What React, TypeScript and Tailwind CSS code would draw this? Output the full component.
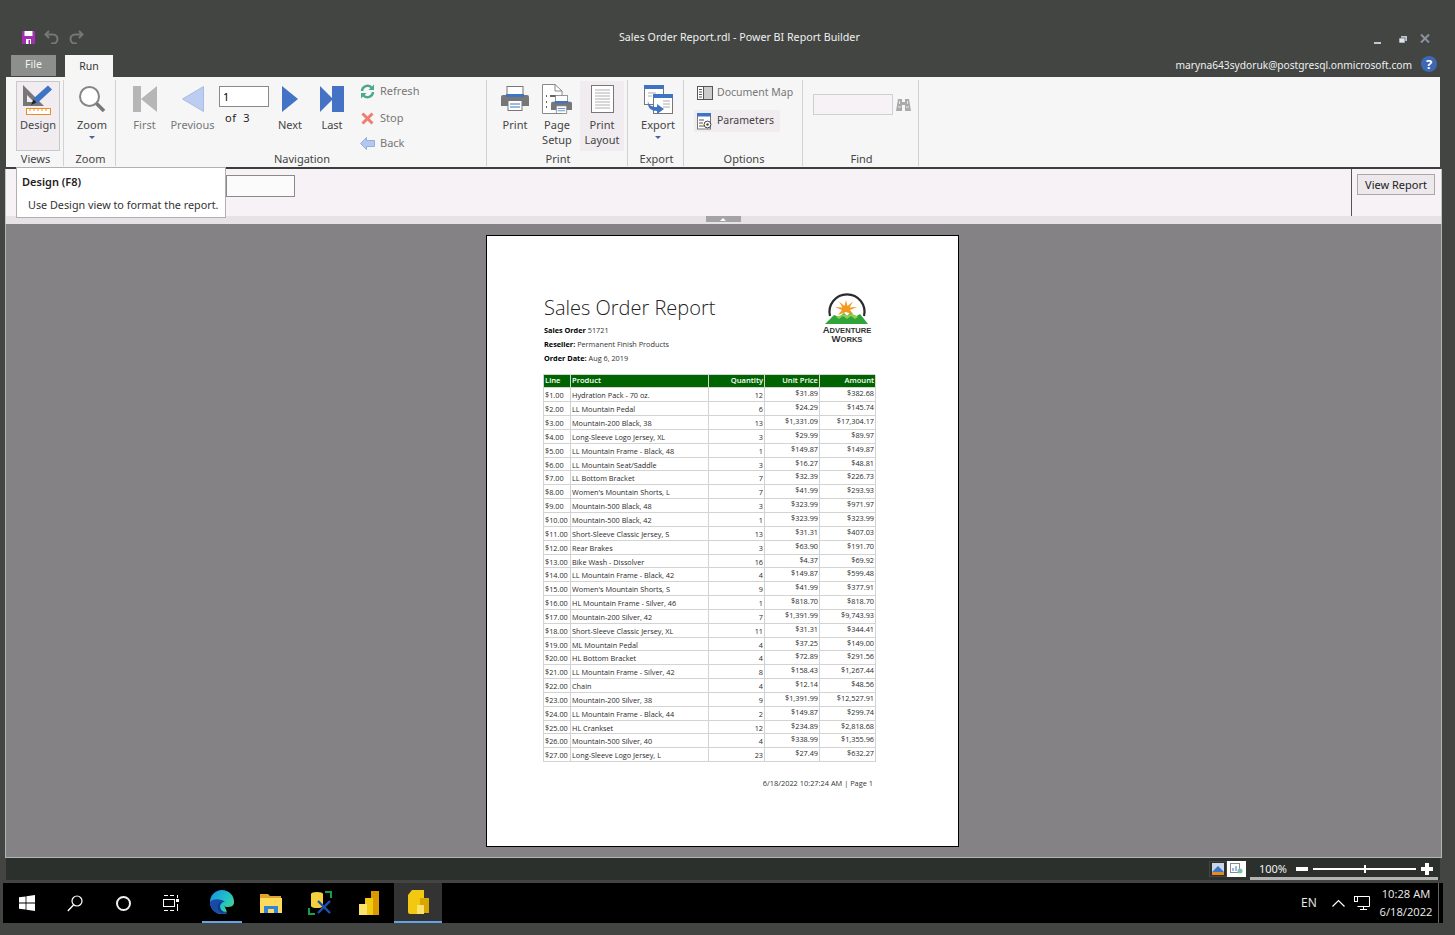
import React from "react";

const UI_FONT = "font-['Noto_Sans',sans-serif]";

const orderLines: [string, string, string, string, string][] = [
  ["$1.00", "Hydration Pack - 70 oz.", "12", "$31.89", "$382.68"],
  ["$2.00", "LL Mountain Pedal", "6", "$24.29", "$145.74"],
  ["$3.00", "Mountain-200 Black, 38", "13", "$1,331.09", "$17,304.17"],
  ["$4.00", "Long-Sleeve Logo Jersey, XL", "3", "$29.99", "$89.97"],
  ["$5.00", "LL Mountain Frame - Black, 48", "1", "$149.87", "$149.87"],
  ["$6.00", "LL Mountain Seat/Saddle", "3", "$16.27", "$48.81"],
  ["$7.00", "LL Bottom Bracket", "7", "$32.39", "$226.73"],
  ["$8.00", "Women's Mountain Shorts, L", "7", "$41.99", "$293.93"],
  ["$9.00", "Mountain-500 Black, 48", "3", "$323.99", "$971.97"],
  ["$10.00", "Mountain-500 Black, 42", "1", "$323.99", "$323.99"],
  ["$11.00", "Short-Sleeve Classic Jersey, S", "13", "$31.31", "$407.03"],
  ["$12.00", "Rear Brakes", "3", "$63.90", "$191.70"],
  ["$13.00", "Bike Wash - Dissolver", "16", "$4.37", "$69.92"],
  ["$14.00", "LL Mountain Frame - Black, 42", "4", "$149.87", "$599.48"],
  ["$15.00", "Women's Mountain Shorts, S", "9", "$41.99", "$377.91"],
  ["$16.00", "HL Mountain Frame - Silver, 46", "1", "$818.70", "$818.70"],
  ["$17.00", "Mountain-200 Silver, 42", "7", "$1,391.99", "$9,743.93"],
  ["$18.00", "Short-Sleeve Classic Jersey, XL", "11", "$31.31", "$344.41"],
  ["$19.00", "ML Mountain Pedal", "4", "$37.25", "$149.00"],
  ["$20.00", "HL Bottom Bracket", "4", "$72.89", "$291.56"],
  ["$21.00", "LL Mountain Frame - Silver, 42", "8", "$158.43", "$1,267.44"],
  ["$22.00", "Chain", "4", "$12.14", "$48.56"],
  ["$23.00", "Mountain-200 Silver, 38", "9", "$1,391.99", "$12,527.91"],
  ["$24.00", "LL Mountain Frame - Black, 44", "2", "$149.87", "$299.74"],
  ["$25.00", "HL Crankset", "12", "$234.89", "$2,818.68"],
  ["$26.00", "Mountain-500 Silver, 40", "4", "$338.99", "$1,355.96"],
  ["$27.00", "Long-Sleeve Logo Jersey, L", "23", "$27.49", "$632.27"],
];
// rows that came out a pixel shorter in the rendered report
const shortRows = [5, 12, 18, 24];

function Group({ width, label, children }: { width: string; label: string; children: React.ReactNode }) {
  return (
    <div className={`${width} shrink-0 h-[86px] border-r border-[#d2d2d2] flex flex-col`}>
      <div className="h-[71px] flex items-start">{children}</div>
      <div className="h-[15px] leading-[15px] text-center pl-[2px] text-[11px] text-[#444]">{label}</div>
    </div>
  );
}

function BigButton({ width, lines, icon, active, arrow, dim }: { width: string; lines: string[]; icon: React.ReactNode; active?: boolean; arrow?: boolean; dim?: boolean }) {
  return (
    <div className={`${width} shrink-0 h-[70px] mt-[1px] flex flex-col items-center ${active ? "bg-[#f1ecf0]" : ""}`}>
      <div className="h-[36px] flex items-center justify-center">{icon}</div>
      {lines.map((l) => (
        <div key={l} className={`h-[15px] leading-[15px] text-[11px] ${dim ? "text-[#777]" : "text-[#444]"}`}>{l}</div>
      ))}
      {arrow && <div className="mt-[4px] w-0 h-0 border-l-[3px] border-r-[3px] border-t-[3px] border-l-transparent border-r-transparent border-t-[#4a5fa8]" />}
    </div>
  );
}

function SmallRow({ icon, label, mb }: { icon: React.ReactNode; label: string; mb: string }) {
  return (
    <div className={`h-[16px] flex items-center gap-[5px] ${mb}`}>
      <div className="w-[15px] h-[16px] flex items-center justify-center">{icon}</div>
      <span className="text-[11px] text-[#777]">{label}</span>
    </div>
  );
}

/* ribbon icons */
const DesignIcon = () => (
  <svg width="32" height="32" viewBox="0 0 32 32">
    <path d="M1 1 L1 22 L22 22 Z" fill="#777" />
    <path d="M5 11 L5 18 L12 18 Z" fill="#f1ecf0" />
    <path d="M10 20 L12 14 L26 1.5 L30 5.5 L16 18.5 Z" fill="#3f74c4" />
    <path d="M9 21 L11.5 15.5 L14.5 18.5 Z" fill="#222" />
    <rect x="4.5" y="24.5" width="24" height="6" fill="#fff" stroke="#ef8a1f" />
    <path d="M8 25v2M12 25v2M16 25v2M20 25v2M24 25v2" stroke="#ef8a1f" />
  </svg>
);
const ZoomIcon = () => (
  <svg width="28" height="28" viewBox="0 0 28 28">
    <circle cx="11.5" cy="11.5" r="9.5" fill="#fff" stroke="#858585" strokeWidth="2" />
    <path d="M18.5 18.5 L26 26" stroke="#777" strokeWidth="3.5" />
  </svg>
);
const FirstIcon = () => (
  <svg width="24" height="26" viewBox="0 0 24 26"><rect width="8" height="26" fill="#b6b6b6" /><path d="M24 0V26L8 13Z" fill="#b6b6b6" /></svg>
);
const PrevIcon = () => (
  <svg width="22" height="26" viewBox="0 0 22 26"><path d="M21.5 .5V25.5L.5 13Z" fill="#bccdf1" stroke="#a9bce6" /></svg>
);
const NextIcon = () => (
  <svg width="16" height="26" viewBox="0 0 16 26"><path d="M0 0V26L16 13Z" fill="#4472c4" /></svg>
);
const LastIcon = () => (
  <svg width="24" height="26" viewBox="0 0 24 26"><path d="M0 0V26L13 13Z" fill="#4472c4" /><rect x="12" width="12" height="26" fill="#4472c4" /></svg>
);
const RefreshIcon = () => (
  <svg width="15" height="15" viewBox="0 0 15 15" fill="none">
    <path d="M2 7a5.5 5.5 0 0 1 9.5-3.5" stroke="#4aa98c" strokeWidth="2.4" />
    <path d="M13 8a5.5 5.5 0 0 1-9.5 3.5" stroke="#4aa98c" strokeWidth="2.4" />
    <path d="M14 .5V6H8.5Z" fill="#4aa98c" /><path d="M1 14.5V9H6.5Z" fill="#4aa98c" />
  </svg>
);
const StopIcon = () => (
  <svg width="13" height="13" viewBox="0 0 13 13"><path d="M1.5 1.5 L11.5 11.5 M11.5 1.5 L1.5 11.5" stroke="#ec7f72" strokeWidth="3" /></svg>
);
const BackIcon = () => (
  <svg width="15" height="13" viewBox="0 0 15 13"><path d="M.5 6.5 L6.5 .5V3.5H14.5V9.5H6.5V12.5Z" fill="#b4c7ec" stroke="#94aee0" /></svg>
);
const PrinterShape = ({ x = 0, y = 0 }: { x?: number; y?: number }) => (
  <g transform={`translate(${x} ${y})`}>
    <rect x="6" y="0.5" width="16" height="10" fill="#fff" stroke="#777" />
    <path d="M0 11a2 2 0 0 1 2-2H26a2 2 0 0 1 2 2V20H0Z" fill="#777" />
    <rect x="5" y="8" width="18" height="3" fill="#3f74c4" />
    <rect x="7" y="14.5" width="14" height="10" fill="#fff" stroke="#777" />
    <path d="M9 18h10M9 21h10" stroke="#3f74c4" />
  </g>
);
const PrintIcon = () => (
  <svg width="28" height="26" viewBox="0 0 28 26"><PrinterShape /></svg>
);
const PageSetupIcon = () => (
  <svg width="30" height="30" viewBox="0 0 30 30">
    <path d="M.5 .5H13L20 7V29.5H.5Z" fill="#fff" stroke="#888" />
    <path d="M13 .5V7H20" fill="none" stroke="#888" />
    <path d="M4 12h1M8 12h6M4 18h1M4 23h1" stroke="#666" strokeWidth="2" />
    <g transform="translate(9 11) scale(.75)"><PrinterShape /></g>
  </svg>
);
const PrintLayoutIcon = () => (
  <svg width="23" height="28" viewBox="0 0 23 28">
    <rect x=".5" y=".5" width="22" height="27" fill="#fff" stroke="#777" />
    <path d="M4 5h15M4 8h15M4 11h15M4 14h15M4 17h15M4 20h15M4 23h15" stroke="#b0b0b0" />
  </svg>
);
const ExportIcon = () => (
  <svg width="29" height="29" viewBox="0 0 29 29">
    <rect x=".5" y=".5" width="19" height="19" fill="#fff" stroke="#777" />
    <rect x="0" y="0" width="20" height="4" fill="#3f74c4" />
    <rect x="9.5" y="9.5" width="19" height="19" fill="#fff" stroke="#777" />
    <rect x="9" y="9" width="20" height="4" fill="#3f74c4" />
    <path d="M19 16h7M19 19h7M19 22h7M4 8h8M4 11h4" stroke="#aaa" />
    <path d="M4 15c0 5 3 7 9 7v-3l7 5-7 5v-3C6 26 3 22 4 15Z" fill="#3f74c4" />
  </svg>
);
const DocMapIcon = () => (
  <svg width="16" height="14" viewBox="0 0 16 14">
    <rect x=".5" y=".5" width="15" height="13" fill="#ccc" stroke="#555" />
    <rect x="1" y="1" width="6" height="12" fill="#fff" />
    <path d="M6.5 1v12" stroke="#555" /><path d="M2 3.5h3M2 6h3M2 8.5h3M2 11h3" stroke="#555" />
  </svg>
);
const ParamsIcon = () => (
  <svg width="15" height="17" viewBox="0 0 15 17">
    <rect x=".5" y=".5" width="13" height="15.5" fill="#fff" stroke="#777" />
    <rect width="14" height="3.5" fill="#3f74c4" />
    <path d="M2 7h5M2 10h4M2 13h5" stroke="#555" />
    <circle cx="10.5" cy="11.5" r="3.4" fill="#fff" stroke="#444" />
    <circle cx="10.5" cy="11.5" r="1.2" fill="#444" />
  </svg>
);
const BinocularsIcon = () => (
  <svg width="15" height="14" viewBox="0 0 15 14" fill="#aaa">
    <path d="M2 1H6V4H9V1H13L15 13H9V7H6V13H0Z" />
    <path d="M3.5 3V6M11.5 3V6M2 9H5M10 9H13" stroke="#e8e8e8" />
  </svg>
);

function AdventureLogo() {
  return (
    <div className="w-[50px] mr-[3px] flex flex-col items-center">
      <svg width="50" height="32" viewBox="0 0 50 32" className="block">
        <path d="M8 23 A17.5 17.5 0 1 1 42 23" fill="none" stroke="#2b2b2b" strokeWidth="2.2" />
        <path d="M24 7 L25.5 13 L31 8.5 L27.5 14.5 L35 14 L28 17 L32 22 L24 19 L16 22 L20 17 L13 14 L20.5 14.5 L17 8.5 L22.5 13 Z" fill="#f39a1e" />
        <path d="M3 31 L12 22 L17 24 L22 20 L25 23 L28 20 L33 24 L38 21 L46 31 Z" fill="#2fa43a" />
        <path d="M14 24 L17 26 L21 23 L25 26 L29 23 L33 26 L36 24 L33 22 L28 21 L25 23 L22 21 L17 23 Z" fill="#8fd14f" />
      </svg>
      <div className="mt-[1px] font-['Liberation_Sans',sans-serif] font-bold text-[7.6px] leading-[8px] text-[#333] text-center whitespace-nowrap">
        <div><span className="text-[9.5px]">A</span>DVENTURE</div>
        <div><span className="text-[9.5px]">W</span>ORKS</div>
      </div>
    </div>
  );
}

function ReportTable() {
  const cell = "border-r border-b border-[#d3d3d3] px-[1px] overflow-hidden whitespace-nowrap";
  return (
    <div className="w-[332px] grid grid-cols-[27px_138px_56px_55px_56px] border-l border-t border-[#d3d3d3] text-[7.3px] text-[#2a2a2a] font-['Open_Sans',sans-serif]">
      {["Line", "Product", "Quantity", "Unit Price", "Amount"].map((h, i) => (
        <div key={h} className={`h-[13px] leading-[10px] bg-[#006400] text-white font-semibold text-[7.6px] ${cell} ${i > 1 ? "text-right" : "text-left"}`}>{h}</div>
      ))}
      {orderLines.map((row, r) => {
        const h = shortRows.includes(r) ? "h-[13px]" : "h-[14px]";
        return (
          <React.Fragment key={row[0]}>
            <div className={`${h} leading-[14px] ${cell}`}>{row[0]}</div>
            <div className={`${h} leading-[14px] ${cell} pl-[1px]`}>{row[1]}</div>
            <div className={`${h} leading-[14px] text-right ${cell}`}>{row[2]}</div>
            <div className={`${h} leading-[11px] text-right ${cell}`}>{row[3]}</div>
            <div className={`${h} leading-[11px] text-right ${cell}`}>{row[4]}</div>
          </React.Fragment>
        );
      })}
    </div>
  );
}

function ReportPage() {
  return (
    <div className="w-[473px] h-[612px] bg-white border border-black pl-[56px] pt-[57px] font-['Open_Sans',sans-serif]">
      <div className="w-[332px] h-[81px] flex justify-between items-start">
        <div className="pl-[1px] pt-[1px]">
          <div className="h-[29px] leading-[28px] text-[20px] font-light text-[#222]">Sales Order Report</div>
          <div className="h-[14px] leading-[14px] text-[7.3px] text-[#333]"><b className="text-black">Sales Order</b> 51721</div>
          <div className="h-[14px] leading-[14px] text-[7.3px] text-[#333]"><b className="text-black">Reseller:</b> Permanent Finish Products</div>
          <div className="h-[14px] leading-[14px] text-[7.3px] text-[#333]"><b className="text-black">Order Date:</b> Aug 6, 2019</div>
        </div>
        <AdventureLogo />
      </div>
      <ReportTable />
      <div className="w-[332px] mt-[15px] pr-[2px] text-right text-[7.4px] leading-[12px] text-[#333]">6/18/2022 10:27:24 AM | Page 1</div>
    </div>
  );
}

export default function App() {
  return (
    <div className={`w-[1455px] h-[935px] overflow-hidden bg-[#424542] flex flex-col ${UI_FONT}`}>
      {/* title bar */}
      <div className="h-[55px] shrink-0 flex items-start pt-[30px] pl-[22px] text-white">
        <div className="w-[597px] flex items-center gap-[9px] h-[14px]">
          <svg width="13" height="13" viewBox="0 0 13 13">
            <rect width="13" height="13" fill="#a12fb0" />
            <rect x="2.5" y="0" width="8" height="5" fill="#fff" />
            <rect x="4" y="8" width="5" height="5" fill="#fff" />
            <rect x="6.5" y="9" width="1.5" height="4" fill="#a12fb0" />
          </svg>
          <svg width="15" height="14" viewBox="0 0 15 14" fill="none" stroke="#777" strokeWidth="2">
            <path d="M5 1 L1.5 4.5 L5 8" /><path d="M2 4.5H9a4.5 4.5 0 0 1 0 9H7" />
          </svg>
          <svg width="15" height="14" viewBox="0 0 15 14" fill="none" stroke="#777" strokeWidth="2" className="ml-[1px]">
            <path d="M10 1 L13.5 4.5 L10 8" /><path d="M13 4.5H6a4.5 4.5 0 0 0 0 9H8" />
          </svg>
        </div>
        <div className="text-[10.7px] leading-[14px] w-[755px] text-[#f0f0f0]">Sales Order Report.rdl - Power BI Report Builder</div>
        <div className="flex items-center h-[24px]">
          <div className="w-[7px] h-[2px] bg-[#c0c8d8] mt-[1px]" />
          <svg width="8" height="7" viewBox="0 0 8 7" className="ml-[18px] -mt-[6px]"><rect x="2" width="6" height="5" fill="#c0c8d8" /><rect y="2" width="6" height="5" fill="#dfe4ee" stroke="#424542" strokeWidth=".6" /></svg>
          <svg width="10" height="9" viewBox="0 0 10 9" className="ml-[13px] -mt-[8px]"><path d="M1 .5 L9 8.5 M9 .5 L1 8.5" stroke="#8c93a0" strokeWidth="2" /></svg>
        </div>
      </div>

      {/* tabs */}
      <div className="h-[22px] shrink-0 flex items-end pl-[11px] relative">
        <div className="w-[45px] h-[21px] mb-[1px] bg-[#8c8f8c] text-[#f4f4f4] text-[10.5px] leading-[19px] text-center">File</div>
        <div className="w-[48px] h-[22px] ml-[9px] bg-[#f6f6f6] text-[#333] text-[10.5px] leading-[22px] text-center">Run</div>
        <div className="flex-1 flex items-center justify-end pb-[3px] pr-[18px] gap-[9px] h-[22px]">
          <span className="text-[10.2px] text-[#f0f0f0] leading-[18px]">maryna643sydoruk@postgresql.onmicrosoft.com</span>
          <div className="w-[16px] h-[16px] rounded-full bg-[#3f68b4] text-white text-[13px] font-bold leading-[16px] text-center mb-[1px]">?</div>
        </div>
      </div>

      {/* ribbon */}
      <div className="ml-[6px] w-[1434px] h-[92px] shrink-0 bg-[#f6f6f6] border-b-2 border-[#3c3f3c] pt-[3px] flex relative">
        <Group width="w-[58px]" label="Views">
          <div className="ml-[10px] w-[44px] h-[70px] mt-[1px] border border-[#c8c8c8] bg-[#f1ecf0] flex flex-col items-center">
            <div className="h-[35px] flex items-center justify-center"><DesignIcon /></div>
            <div className="h-[15px] leading-[15px] text-[11px] text-[#444]">Design</div>
          </div>
        </Group>
        <Group width="w-[52px]" label="Zoom">
          <div className="pl-[6px]"><BigButton width="w-[44px]" lines={["Zoom"]} icon={<ZoomIcon />} arrow /></div>
        </Group>
        <Group width="w-[371px]" label="Navigation">
          <div className="pl-[7px] flex items-start">
            <BigButton width="w-[43px]" lines={["First"]} icon={<FirstIcon />} dim />
            <BigButton width="w-[53px]" lines={["Previous"]} icon={<PrevIcon />} dim />
            <div className="w-[50px] shrink-0 mt-[6px]">
              <div className="h-[21px] border border-[#8a8a8a] bg-white text-[11px] leading-[19px] pl-[3px] text-black">1</div>
              <div className="mt-[3px] pl-[6px] text-[11px] leading-[15px] text-[#222] tracking-[.5px]">of&nbsp; 3</div>
            </div>
            <BigButton width="w-[42px]" lines={["Next"]} icon={<NextIcon />} />
            <BigButton width="w-[42px]" lines={["Last"]} icon={<LastIcon />} />
            <div className="ml-[7px] pt-[3px]">
              <SmallRow icon={<RefreshIcon />} label="Refresh" mb="mb-[11px]" />
              <SmallRow icon={<StopIcon />} label="Stop" mb="mb-[9px]" />
              <SmallRow icon={<BackIcon />} label="Back" mb="" />
            </div>
          </div>
        </Group>
        <Group width="w-[141px]" label="Print">
          <div className="pl-[7px] flex items-start">
            <BigButton width="w-[42px]" lines={["Print"]} icon={<PrintIcon />} />
            <BigButton width="w-[42px]" lines={["Page", "Setup"]} icon={<PageSetupIcon />} />
            <div className="ml-[2px]"><BigButton width="w-[44px]" lines={["Print", "Layout"]} icon={<PrintLayoutIcon />} active /></div>
          </div>
        </Group>
        <Group width="w-[56px]" label="Export">
          <div className="pl-[8px]"><BigButton width="w-[44px]" lines={["Export"]} icon={<ExportIcon />} arrow /></div>
        </Group>
        <Group width="w-[119px]" label="Options">
          <div className="pl-[10px] pt-[2px] text-[10.5px]">
            <div className="h-[22px] flex items-center gap-[4px] pl-[3px] text-[#777] whitespace-nowrap"><DocMapIcon /><span>Document Map</span></div>
            <div className="w-[86px] h-[22px] mt-[6px] flex items-center gap-[5px] pl-[3px] bg-[#f1ecf0] text-[#444] whitespace-nowrap"><ParamsIcon /><span>Parameters</span></div>
          </div>
        </Group>
        <Group width="w-[116px]" label="Find">
          <div className="pl-[10px] pt-[14px] flex items-center gap-[3px]">
            <div className="w-[80px] h-[21px] border border-[#d0d0d0] bg-[#f6f2f6]" />
            <BinocularsIcon />
          </div>
        </Group>
      </div>

      {/* parameter bar */}
      <div className="ml-[5px] w-[1437px] h-[47px] shrink-0 bg-[#f6f2f6] border-l border-r border-[#c4c4c4] flex relative">
        <div className="ml-[220px] mt-[6px] w-[69px] h-[22px] border border-[#8a8a8a] bg-[#fbfbfb]" />
        <div className="ml-auto mr-[89px] w-px bg-[#555]" />
        <div className="absolute right-[6px] top-[5px] w-[78px] h-[21px] bg-[#ece8ec] border border-[#a8a8a8] text-[11px] leading-[19px] text-center text-[#222]">View Report</div>
        {/* hover tooltip */}
        <div className="absolute left-[10px] -top-[2px] w-[210px] h-[51px] bg-white border border-[#b0b0b0] pl-[5px] z-10">
          <div className="text-[11px] font-semibold leading-[14px] pt-[7px] h-[30px] text-[#222]">Design (F8)</div>
          <div className="text-[10.8px] leading-[14px] pl-[6px] text-[#333] whitespace-nowrap">Use Design view to format the report.</div>
        </div>
      </div>

      {/* collapse strip */}
      <div className="ml-[5px] w-[1437px] h-[8px] shrink-0 bg-[#e6e2e6] border-l border-r border-[#c4c4c4] flex justify-center pr-[1px]">
        <div className="w-[35px] h-[6px] bg-[#a4a4a4] flex justify-center items-center">
          <div className="w-0 h-0 border-l-[3px] border-r-[3px] border-b-[3px] border-l-transparent border-r-transparent border-b-white" />
        </div>
      </div>

      {/* report canvas */}
      <div className="ml-[5px] w-[1437px] h-[634px] shrink-0 bg-[#858285] border-l border-r border-b border-[#b4b4b4] flex justify-center pt-[11px] pr-[2px]">
        <ReportPage />
      </div>

      {/* status bar */}
      <div className="ml-[6px] w-[1434px] h-[22px] shrink-0 bg-[#2c302c] flex items-start justify-end text-white relative">
        <div className="mt-[3px] flex items-center mr-[4px]">
          <div className="w-[18px] h-[16px] border border-[#444] flex items-center justify-center">
            <svg width="12" height="12" viewBox="0 0 12 12"><rect width="12" height="9" fill="#c7d6ea" /><path d="M0 9L6 3l6 6Z" fill="#3f74c4" /><rect y="9" width="12" height="3" fill="#e58a24" /></svg>
          </div>
          <div className="w-[19px] h-[16px] bg-white flex items-center justify-center">
            <svg width="13" height="12" viewBox="0 0 13 12" fill="none"><rect x=".5" y=".5" width="9" height="9" stroke="#8a8a8a" /><path d="M3 8V5M6 8V3" stroke="#3f74c4" /><circle cx="10" cy="8" r="2.5" fill="#7cc2a4" /></svg>
          </div>
        </div>
        <div className="w-[188px] h-[22px] border-b-[3px] border-[#b4b4b4] flex items-center pt-[3px]">
          <span className="w-[46px] text-center text-[11px] leading-[16px] text-[#f0f0f0]">100%</span>
          <div className="w-[12px] h-[4px] bg-white" />
          <div className="w-[103px] h-[2px] bg-white ml-[5px] flex justify-center items-center"><div className="w-[2px] h-[8px] bg-white" /></div>
          <div className="ml-[5px] w-[12px] h-[12px] flex items-center justify-center relative">
            <div className="w-[12px] h-[4px] bg-white" />
            <div className="absolute left-[4px] top-0 w-[4px] h-[12px] bg-white" />
          </div>
        </div>
        <div className="w-[2px]" />
      </div>

      <div className="h-[3px] shrink-0" />

      {/* windows taskbar */}
      <div className="ml-[3px] w-[1440px] h-[40px] shrink-0 bg-black flex items-stretch text-white">
        <div className="w-[48px] flex items-center justify-center">
          <svg width="16" height="16" viewBox="0 0 16 16" fill="#fff"><path d="M0 2.3 6.6 1.4V7.6H0ZM7.4 1.3 16 0V7.6H7.4ZM0 8.4H6.6V14.6L0 13.7ZM7.4 8.4H16V16L7.4 14.7Z" /></svg>
        </div>
        <div className="w-[48px] flex items-center justify-center">
          <svg width="16" height="17" viewBox="0 0 16 17" fill="none" stroke="#fff" strokeWidth="1.2"><circle cx="10" cy="6" r="5" /><path d="M6.5 10 L.8 16" strokeWidth="1.4" /></svg>
        </div>
        <div className="w-[48px] flex items-center justify-center">
          <div className="w-[15px] h-[15px] rounded-full border-2 border-[#f0f0f0]" />
        </div>
        <div className="w-[48px] flex items-center justify-center">
          <svg width="16" height="16" viewBox="0 0 16 16" fill="none" stroke="#fff"><path d="M1 .5H5M7 .5H11M1 15.5H5M7 15.5H11" /><rect x=".5" y="4.5" width="11" height="7" /><rect x="13" y="4" width="3" height="3" fill="#fff" stroke="none" /><path d="M14.5 0V3M14.5 9V16" /></svg>
        </div>
        <div className="w-[40px] ml-[7px] flex items-center justify-center border-b-[2px] border-[#63a3e6]">
          <svg width="24" height="24" viewBox="0 0 24 24">
            <defs>
              <linearGradient id="edgeTop" x1="0" y1="0" x2="1" y2=".8"><stop offset="0" stopColor="#1493e0" /><stop offset=".6" stopColor="#22c3c8" /><stop offset="1" stopColor="#52d578" /></linearGradient>
            </defs>
            <circle cx="12" cy="12" r="12" fill="url(#edgeTop)" />
            <path d="M0 12C0 20 6 24 12 24c3 0 6-1 8-3-5 2-10 0-10-4 0-3 2-5 5-5-3-3-12-4-15 0Z" fill="#1a4aa8" />
            <path d="M11 12c-3 1-4 4-3 7 1 2 3 4 6 4-2-2-4-4-4-7 0-2 1-3 2-4Z" fill="#0b2d6b" opacity=".6" />
            <path d="M24 14c-1 2-3 3-6 3-2 0-4 0-4-2 1 3 3 5 3 9h7Z" fill="#000" />
          </svg>
        </div>
        <div className="w-[49px] ml-[4px] flex items-center justify-center">
          <svg width="22" height="20" viewBox="0 0 22 20"><path d="M0 1H8L10 3H21V19H0Z" fill="#dfa52c" /><rect x="0" y="5" width="22" height="15" fill="#ffd95c" /><rect x="4" y="13" width="14" height="7" fill="#2f86d9" /><rect x="8" y="16" width="6" height="4" fill="#ffd95c" /></svg>
        </div>
        <div className="w-[49px] flex items-center justify-center">
          <svg width="24" height="24" viewBox="0 0 24 24" fill="none">
            <path d="M1 17V23H7M17 1H23V7" stroke="#12a04a" strokeWidth="2" />
            <path d="M3 3a6 2 0 0 1 12 0V15a6 2 0 0 1-12 0Z" fill="#f5d23c" />
            <path d="M10 10 L22 22 M22 10 L10 22" stroke="#1e50b4" strokeWidth="2.4" />
          </svg>
        </div>
        <div className="w-[49px] flex items-center justify-center">
          <svg width="20" height="24" viewBox="0 0 20 24"><rect x="12" width="8" height="24" fill="#d99a00" /><rect x="6" y="7" width="8" height="17" fill="#f2c811" /><rect y="13" width="8" height="11" fill="#fbe26a" /></svg>
        </div>
        <div className="w-[48px] ml-[1px] bg-[#333] flex items-center justify-center border-b-[2px] border-[#63a3e6]">
          <svg width="21" height="24" viewBox="0 0 21 24"><path d="M4 0H16V24H2Q0 24 0 22V5Z" fill="#f2c811" /><rect x="12" y="8" width="9" height="15" fill="#d9a500" /><rect x="9" y="15" width="7" height="9" fill="#fbe26a" /></svg>
        </div>
        <div className="flex-1" />
        <div className="text-[12px] flex items-center w-[26px] font-['Open_Sans',sans-serif] text-[#eee]">EN</div>
        <div className="w-[22px] flex items-center justify-center">
          <svg width="13" height="8" viewBox="0 0 13 8" fill="none" stroke="#fff" strokeWidth="1.2"><path d="M.5 7.5 6.5 1.5 12.5 7.5" /></svg>
        </div>
        <div className="w-[26px] flex items-center justify-center">
          <svg width="16" height="14" viewBox="0 0 16 14" fill="none" stroke="#fff"><path d="M3.5 .5H15.5V10.5H3.5M9.5 10.5V13.5M6 13.5H13" /><rect x=".5" y=".5" width="3" height="5" /></svg>
        </div>
        <div className="w-[62px] text-center text-[11.2px] leading-[18px] pt-[2px] font-['Open_Sans',sans-serif] text-[#eee] whitespace-nowrap">
          <div>10:28 AM</div>
          <div>6/18/2022</div>
        </div>
        <div className="w-[5px] border-l border-[#666] ml-[1px]" />
      </div>
    </div>
  );
}
